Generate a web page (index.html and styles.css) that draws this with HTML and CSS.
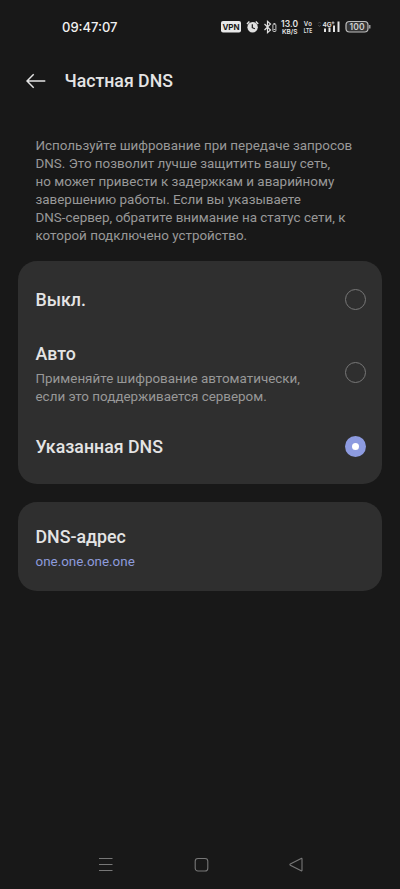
FILE: index.html
```html
<!DOCTYPE html>
<html lang="ru">
<head>
<meta charset="utf-8">
<title>Частная DNS</title>
<link rel="stylesheet" href="styles.css">
</head>
<body>
<div class="screen">
  <div class="status">
    <span class="time">09:47:07</span>
    <svg class="indicators" width="152" height="18" viewBox="220 18 152 18">
      <rect x="221" y="21" width="20" height="11.500" rx="2" fill="#e8e8e8"/>
      <text x="222.500" y="30" class="vpn" textLength="17">VPN</text>
      <circle cx="252.600" cy="27.200" r="5.200" fill="#e0e0e0"/>
      <path d="M247 24l2.400-2.600M258.200 24l-2.400-2.600" stroke="#e0e0e0" stroke-width="1.500"/>
      <path d="M252.300 24.200v3.500l2.600 1" stroke="#181818" stroke-width="1.200" fill="none"/>
      <path d="M264.500 24l6 6-3 2.600V21.400l3 2.600-6 6" stroke="#e0e0e0" stroke-width="1.200" fill="none"/>
      <rect x="272.900" y="24.300" width="3" height="7.200" rx=".6" stroke="#c4c4c4" stroke-width="1" fill="none"/>
      <path d="M273.500 23.500h1.800M273.500 29.500h1.800" stroke="#c4c4c4" stroke-width="1.200"/>
      <text x="281" y="26.800" class="rate" textLength="17">13.0</text>
      <text x="282" y="33.800" class="unit" textLength="15.500">KB/S</text>
      <text x="303.800" y="26.300" class="volte" textLength="8">Vo</text>
      <text x="303.800" y="32.500" class="volte" textLength="8.500" lengthAdjust="spacingAndGlyphs">LTE</text>
      <path d="M318.200 23.500l1.300-1.500 1.300 1.500M318.200 25l1.300 1.500 1.300-1.500" stroke="#555" stroke-width=".8" fill="none"/>
      <text x="322.500" y="26.500" class="net" textLength="9">4G</text>
      <path d="M331.500 22.800h3M333 21.300v3" stroke="#ddd" stroke-width=".8"/>
      <path d="M325 32v-3.500M329.500 32v-4.500M334 32v-6.500M338.500 32V21.500" stroke="#e4e4e4" stroke-width="2"/>
      <rect x="346" y="21.500" width="22" height="10.500" rx="3.500" fill="#353535" stroke="#bdbdbd" stroke-width="1.200"/>
      <path d="M369.800 25v3.500" stroke="#bdbdbd" stroke-width="1.200"/>
      <text x="349.500" y="30.200" class="charge" textLength="15">100</text>
    </svg>
  </div>
  <header class="bar">
    <svg class="back" width="20" height="16" viewBox="0 0 20 16"><path d="M19.300 8H1M7.700 1.300L1 8l6.700 6.700" fill="none" stroke="#e4e4e4" stroke-width="1.500"/></svg>
    <h1>Частная DNS</h1>
  </header>
  <p class="intro">Используйте шифрование при передаче запросов<br>DNS. Это позволит лучше защитить вашу сеть,<br>но может привести к задержкам и аварийному<br>завершению работы. Если вы указываете<br>DNS-сервер, обратите внимание на статус сети, к<br>которой подключено устройство.</p>
  <section class="card options">
    <div class="row"><h2>Выкл.</h2><span class="radio"></span></div>
    <div class="row tall">
      <div class="label">
        <h2>Авто</h2>
        <p class="note">Применяйте шифрование автоматически,<br>если это поддерживается сервером.</p>
      </div>
      <span class="radio"></span>
    </div>
    <div class="row"><h2>Указанная DNS</h2><span class="radio on"></span></div>
  </section>
  <section class="card address">
    <h2>DNS-адрес</h2>
    <p class="note link">one.one.one.one</p>
  </section>
  <nav class="nav">
    <svg width="16" height="16" viewBox="0 0 16 16"><path d="M1 1.500h13.500M1 7.500h13.500M1 13.500h13.500"/></svg>
    <svg width="16" height="16" viewBox="0 0 16 16"><rect x="1.200" y="1.500" width="12.600" height="12.500" rx="2.800"/></svg>
    <svg width="16" height="16" viewBox="0 0 16 16"><path d="M13 1.900v11.400q0 .9-.8.400L1.300 8.200q-.9-.6 0-1.200l10.900-5.600q.8-.4.800.500z"/></svg>
  </nav>
</div>
</body>
</html>
```
FILE: styles.css
```css
* { box-sizing: border-box; }
body { margin: 0; background: #181818; font-family: Roboto, "Liberation Sans", sans-serif; }
h1, h2, p { margin: 0; }
.screen { display: flex; flex-direction: column; height: 889px; }
.status { display: flex; justify-content: space-between; align-items: center; height: 54px; padding: 0 28px 0 62px; }
.time { color: #f0f0f0; font: 500 13px/18px Inter, sans-serif; white-space: nowrap; }
.indicators text { fill: #e6e6e6; font-family: Inter, sans-serif; font-weight: 700; }
.indicators .vpn { fill: #181818; font-size: 8px; }
.indicators .rate { font-size: 8.5px; font-weight: 600; }
.indicators .unit { font-size: 6.5px; font-weight: 600; }
.indicators .volte { font-size: 6px; font-weight: 600; }
.indicators .net { font-size: 6.5px; font-weight: 600; }
.indicators .charge { font-size: 8.5px; font-weight: 600; fill: #d0d0d0; }
.bar { display: flex; align-items: center; height: 54px; padding-left: 26px; }
.back { margin-right: 18.5px; }
h1, h2 { color: #e4e4e4; font-weight: 500; white-space: nowrap; }
h1 { font-size: 17.7px; line-height: 24px; }
h2 { font-size: 17.75px; line-height: 24px; }
.intro { margin: 29px 0 0 35.5px; color: #989898; font-size: 13.42px; line-height: 17.9px; white-space: nowrap; }
.card { margin: 0 18px; padding: 0 16px 0 17.5px; border-radius: 19px; background: #2f2f2f; }
.options { height: 223px; margin-top: 17px; padding-top: 1px; }
.row { display: flex; justify-content: space-between; align-items: center; height: 74px; }
.row > h2 { padding-top: 1px; }
.tall { height: 73px; }
.label { padding-top: 3px; }
.note { margin-top: 4px; color: #989898; font-size: 13.42px; line-height: 18px; white-space: nowrap; }
.radio { flex: none; display: grid; place-items: center; width: 21px; height: 21px; border: 1px solid #777; border-radius: 50%; }
.on { border: 0; background: #8d9be0; }
.on::after { content: ""; width: 7px; height: 7px; border-radius: 50%; background: #fff; }
.address { height: 89px; margin-top: 18px; padding-top: 23px; }
.link { color: #8d9bdc; }
.nav { display: flex; justify-content: space-between; margin-top: auto; padding: 0 95px 16px 98px; }
.nav svg { fill: none; stroke: #777; stroke-width: 1.1; }
```
